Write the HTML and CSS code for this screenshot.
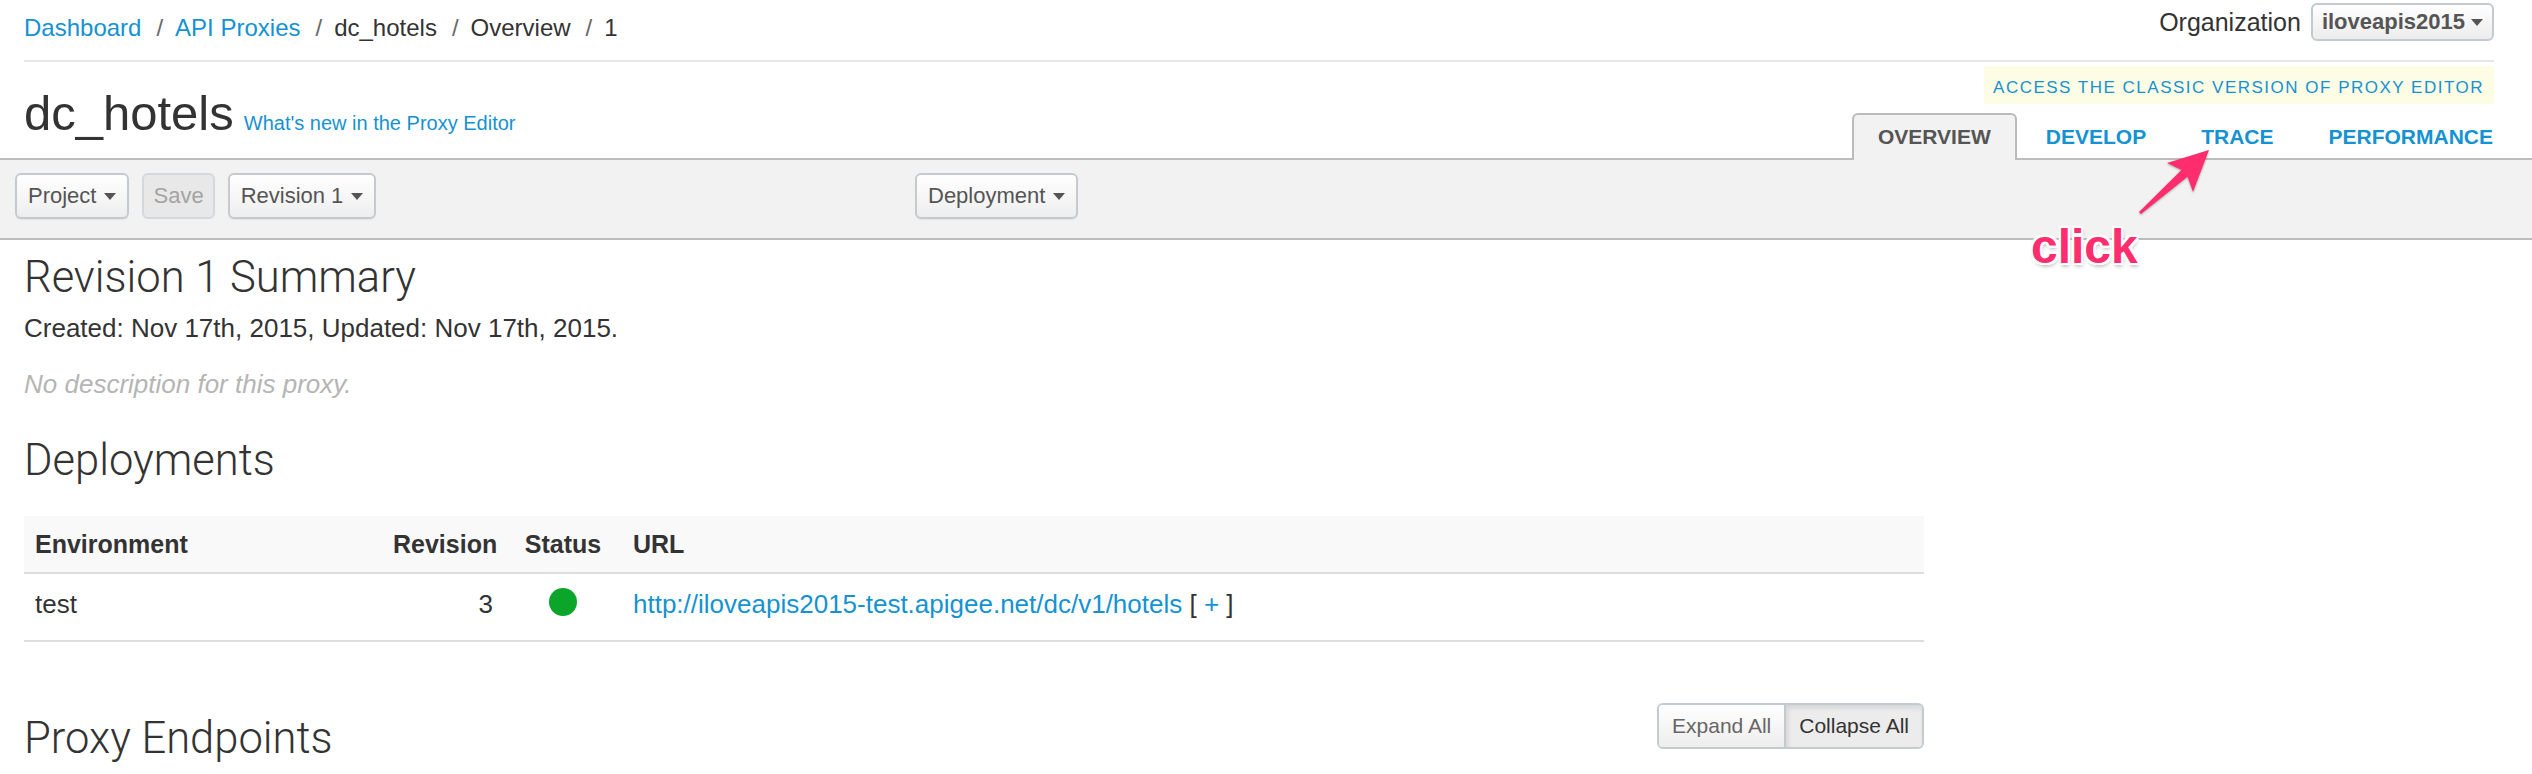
FILE: index.html
```html
<!DOCTYPE html>
<html lang="en">
<head>
<meta charset="utf-8">
<title>dc_hotels - Overview</title>
<link rel="stylesheet" href="styles.css">
</head>
<body>
<header class="masthead">
  <div class="topbar">
    <ol class="crumbs">
      <li><a href="#">Dashboard</a></li>
      <li><a href="#">API Proxies</a></li>
      <li>dc_hotels</li>
      <li>Overview</li>
      <li>1</li>
    </ol>
    <div class="org">
      <span class="org-label">Organization</span>
      <button class="org-select" type="button">iloveapis2015<span class="caret"></span></button>
    </div>
  </div>
  <div class="titlebar">
    <div class="title-wrap">
      <h1 class="proxy-name">dc_hotels</h1>
      <a class="whatsnew" href="#">What's new in the Proxy Editor</a>
    </div>
    <div class="title-right">
      <a class="classic" href="#">ACCESS THE CLASSIC VERSION OF PROXY EDITOR</a>
      <ul class="tabs">
        <li class="tab active">OVERVIEW</li>
        <li class="tab"><a href="#">DEVELOP</a></li>
        <li class="tab"><a href="#">TRACE</a></li>
        <li class="tab"><a href="#">PERFORMANCE</a></li>
      </ul>
    </div>
  </div>
</header>

<div class="toolbar">
  <div class="tb-left">
    <button class="btn" type="button">Project<span class="caret"></span></button>
    <button class="btn btn-save" type="button" disabled>Save</button>
    <button class="btn" type="button">Revision 1<span class="caret"></span></button>
  </div>
  <div class="tb-mid">
    <button class="btn" type="button">Deployment<span class="caret"></span></button>
  </div>
</div>

<main class="content">
  <h2 class="heading sum-title">Revision 1 Summary</h2>
  <p class="created">Created: Nov 17th, 2015, Updated: Nov 17th, 2015.</p>
  <p class="nodesc">No description for this proxy.</p>

  <h2 class="heading deploy-title">Deployments</h2>
  <table class="deploys">
    <colgroup>
      <col class="c-env">
      <col class="c-rev">
      <col class="c-status">
      <col class="c-url">
    </colgroup>
    <thead>
      <tr>
        <th class="env">Environment</th>
        <th class="rev">Revision</th>
        <th class="status">Status</th>
        <th class="url">URL</th>
      </tr>
    </thead>
    <tbody>
      <tr>
        <td class="env">test</td>
        <td class="rev">3</td>
        <td class="status"><span class="dot"></span></td>
        <td class="url"><a href="#">http://iloveapis2015-test.apigee.net/dc/v1/hotels</a> [ <a href="#">+</a> ]</td>
      </tr>
    </tbody>
  </table>

  <div class="endpoints-row">
    <h2 class="heading endpoints-title">Proxy Endpoints</h2>
    <div class="btn-group">
      <button class="grp-btn" type="button">Expand All</button>
      <button class="grp-btn pressed" type="button">Collapse All</button>
    </div>
  </div>
</main>

<svg class="arrow" width="90" height="80" viewBox="0 0 90 80" aria-hidden="true">
  <polygon points="79,10 37,23 51.4,30.1 9,71.9 11,74.1 57.5,36.8 63,52" fill="#fe2d6e"/>
</svg>
<span class="click">click</span>
</body>
</html>
```

FILE: styles.css
```css
* { box-sizing: border-box; }
html, body { margin: 0; }
body {
  font-family: "Liberation Sans", Arial, sans-serif;
  color: #333;
  background: #fff;
  position: relative;
  width: 2532px;
  height: 774px;
  overflow: hidden;
}
a { color: #1592d2; text-decoration: none; }

/* ---------- header ---------- */
.masthead { padding: 0 38px 0 24px; }

.topbar {
  display: flex;
  justify-content: space-between;
  align-items: flex-start;
  height: 62px;
  border-bottom: 2px solid #e6e6e6;
}
.crumbs {
  list-style: none;
  margin: 0;
  padding: 14px 0 0;
  display: flex;
  font-size: 24px;
  line-height: 28px;
  color: #333;
}
.crumbs li + li::before {
  content: "/";
  padding: 0 12px 0 15px;
  color: #6a6a6a;
}

.org {
  display: flex;
  align-items: center;
  gap: 10px;
  margin-top: 3px;
  height: 38px;
}
.org-label { font-size: 25px; color: #333; }
.org-select {
  display: flex;
  align-items: center;
  height: 38px;
  padding: 0 9px;
  border: 2px solid #c3cbd0;
  border-radius: 6px;
  background: linear-gradient(#ffffff, #ececec);
  font-family: inherit;
  font-size: 22px;
  font-weight: bold;
  color: #555;
}
.org-select .caret { margin-left: 6px; }

.caret {
  display: inline-block;
  width: 0;
  height: 0;
  border-left: 6px solid transparent;
  border-right: 6px solid transparent;
  border-top: 7px solid #555;
  margin-left: 8px;
}

.titlebar {
  display: flex;
  justify-content: space-between;
  height: 96px;
}
.title-wrap {
  display: flex;
  align-items: baseline;
  gap: 10px;
  padding-top: 27px;
}
.proxy-name {
  margin: 0;
  font-size: 49px;
  line-height: 49px;
  font-weight: normal;
  color: #333;
}
.whatsnew { font-size: 20px; }

.title-right {
  display: flex;
  flex-direction: column;
  align-items: flex-end;
  padding-top: 4px;
}
.classic {
  display: block;
  height: 38px;
  padding: 6px 10px 0 9px;
  line-height: 32px;
  font-size: 17px;
  letter-spacing: 1.5px;
  background: #fdfce4;
  color: #1592d2;
}
.tabs {
  list-style: none;
  display: flex;
  gap: 3px;
  margin: 9px -25px -2px 0;
  padding: 0;
}
.tab {
  position: relative;
  z-index: 2;
  padding: 0 24px 1px;
  border: 2px solid transparent;
  border-bottom: 0;
  border-radius: 6px 6px 0 0;
  font-size: 21px;
  font-weight: bold;
  line-height: 44px;
}
.tab.active {
  border-color: #bbbbbb;
  background: #f2f2f2;
  color: #555;
}

/* ---------- toolbar ---------- */
.toolbar {
  display: flex;
  background: #f2f2f2;
  border-top: 2px solid #bdbdbd;
  border-bottom: 2px solid #bdbdbd;
  padding: 13px 0 19px 15px;
}
.tb-left {
  width: 900px;
  display: flex;
  gap: 13px;
}
.btn {
  display: inline-flex;
  align-items: center;
  height: 46px;
  padding: 0 11px;
  border: 2px solid #c3cbd0;
  border-radius: 6px;
  background: linear-gradient(#ffffff, #eeeeee);
  box-shadow: 0 1px 1px rgba(0, 0, 0, 0.06);
  font-family: inherit;
  font-size: 22px;
  color: #555;
}
.btn-save {
  padding: 0 9px;
  background: #e8e8e8;
  border-color: #d3d8db;
  color: #a3a3a3;
  box-shadow: none;
}

/* ---------- content ---------- */
.content {
  width: 1924px;
  padding-left: 24px;
}
.heading {
  margin: 0;
  font-family: Roboto, "Liberation Sans", sans-serif;
  font-weight: 300;
  font-size: 43.5px;
  line-height: 46px;
  color: #333;
}
.sum-title { margin-top: 15px; }
.created {
  margin: 12px 0 0;
  font-size: 26px;
  line-height: 30px;
}
.nodesc {
  margin: 26px 0 0;
  font-size: 26px;
  line-height: 30px;
  font-style: italic;
  color: #b5b5b5;
}
.deploy-title { margin-top: 39px; }

.deploys {
  margin-top: 32px;
  width: 1900px;
  border-collapse: collapse;
  table-layout: fixed;
}
.c-env { width: 354px; }
.c-rev { width: 130px; }
.c-status { width: 110px; }
.deploys thead tr { background: #f9f9f9; }
.deploys th {
  padding: 8px 15px;
  line-height: 40px;
  font-size: 25px;
  font-weight: bold;
  text-align: left;
  border-bottom: 2px solid #dddddd;
}
.deploys td {
  padding: 10px 15px 16px;
  line-height: 40px;
  font-size: 26px;
  vertical-align: top;
  border-bottom: 2px solid #dddddd;
}
.deploys .env { padding-left: 11px; }
.deploys .rev { text-align: right; }
.deploys .status { text-align: center; }
.dot {
  display: block;
  width: 28px;
  height: 28px;
  margin: 4px auto 0;
  border-radius: 50%;
  background: #0ba52a;
}

.endpoints-row {
  margin-top: 61px;
  width: 1900px;
  display: flex;
  justify-content: space-between;
  align-items: flex-start;
}
.endpoints-title { margin-top: 13px; }
.btn-group {
  display: flex;
  height: 46px;
  border: 2px solid #c3cbd0;
  border-radius: 6px;
  overflow: hidden;
}
.grp-btn {
  border: 0;
  padding: 0 13px;
  font-family: inherit;
  font-size: 21px;
  color: #666;
  background: linear-gradient(#ffffff, #ededed);
}
.grp-btn.pressed {
  border-left: 2px solid #c3cbd0;
  background: #ececec;
  box-shadow: inset 2px 3px 5px rgba(0, 0, 0, 0.1);
  color: #333;
}

/* ---------- annotation overlay ---------- */
.arrow {
  position: absolute;
  left: 2130px;
  top: 140px;
  filter: drop-shadow(0 1px 1px rgba(0, 0, 0, 0.3));
}
.click {
  position: absolute;
  left: 2031px;
  top: 223px;
  font-size: 48px;
  line-height: 48px;
  font-weight: bold;
  color: #fe2d6e;
  text-shadow:
    -2px -2px 0 #fff, 2px -2px 0 #fff, -2px 2px 0 #fff, 2px 2px 0 #fff,
    0 -2px 0 #fff, 0 2px 0 #fff, -2px 0 0 #fff, 2px 0 0 #fff,
    1px 3px 4px rgba(0, 0, 0, 0.35);
}
```
